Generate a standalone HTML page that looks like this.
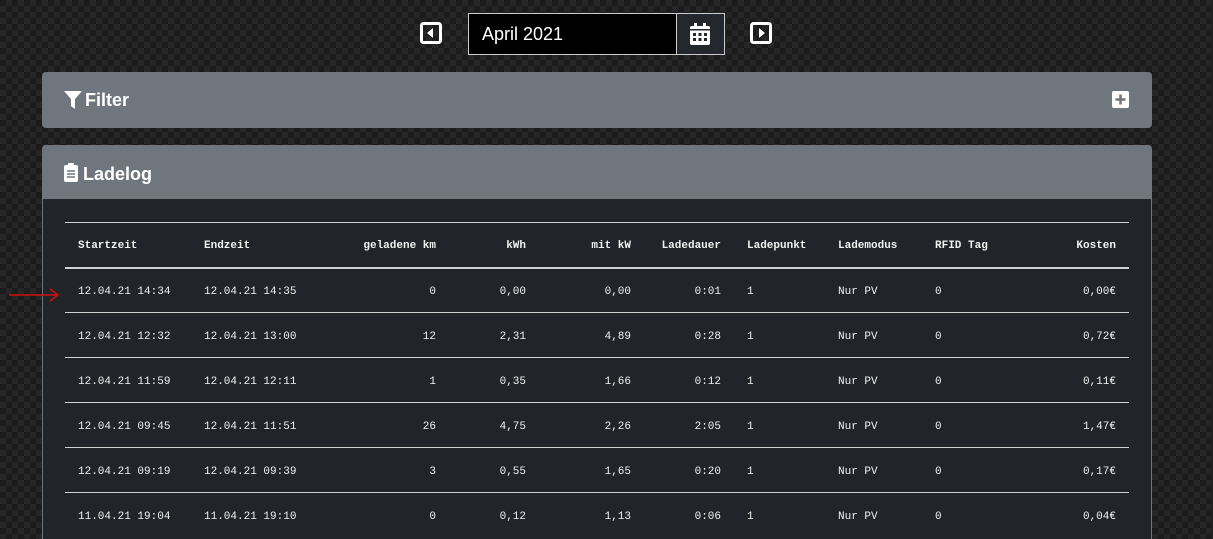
<!DOCTYPE html>
<html><head><meta charset="utf-8"><style>
*{box-sizing:border-box;margin:0;padding:0}
body{width:1213px;height:537px;overflow:hidden;font-family:"Liberation Sans",sans-serif;
background-color:#1c1c1c;
background-image:linear-gradient(45deg,#262626 25%,transparent 25%,transparent 75%,#262626 75%),linear-gradient(45deg,#262626 25%,transparent 25%,transparent 75%,#262626 75%);
background-size:12px 12px;background-position:0 0,6px 6px;position:relative}
.abs{position:absolute}
.card{position:absolute;left:42px;width:1110px;border-radius:4px;background:#6f767e}
.hdr{color:#fff;font-weight:bold;font-size:18px}
.body{position:absolute;left:42px;top:199px;width:1110px;height:340px;background:#212428;border-left:1px solid #6f767e;border-right:1px solid #6f767e}
table{position:absolute;left:22px;top:23px;width:1064px;table-layout:fixed;border-collapse:collapse;font-family:"Liberation Mono","DejaVu Sans Mono",monospace;font-size:11px;color:#f0f0f0}
td,th{height:45px;padding:3px 13px 0;text-align:left;border-top:1px solid #d0d0d0;white-space:nowrap;overflow:visible}
th{font-weight:bold;border-bottom:2px solid #d0d0d0}
.r{text-align:right}
</style></head><body>
<svg class="abs" style="left:420px;top:22px" width="22" height="22" viewBox="0 0 22 22"><rect x="1.5" y="1.5" width="19" height="19" rx="2" fill="none" stroke="#fff" stroke-width="3"/><path d="M13 6v10l-6-5z" fill="#fff"/></svg>
<div class="abs" style="left:468px;top:13px;width:257px;height:42px;border:1px solid #ccc;background:#000"></div>
<div class="abs" style="left:482px;top:24px;color:#fff;font-size:18px">April 2021</div>
<div class="abs" style="left:676px;top:14px;width:48px;height:40px;background:#24272b;border-left:1px solid #ccc"></div>
<svg class="abs" style="left:689px;top:22px" width="22" height="24" viewBox="0 0 22 24"><rect x="1" y="4" width="20" height="19" rx="2" fill="#fff"/><rect x="5" y="1" width="3" height="5" fill="#fff"/><rect x="14" y="1" width="3" height="5" fill="#fff"/><rect x="1" y="7" width="20" height="1.5" fill="#24272b"/><g fill="#24272b"><rect x="4" y="11" width="3" height="3"/><rect x="9.5" y="11" width="3" height="3"/><rect x="15" y="11" width="3" height="3"/><rect x="4" y="16" width="3" height="3"/><rect x="9.5" y="16" width="3" height="3"/><rect x="15" y="16" width="3" height="3"/></g></svg>
<svg class="abs" style="left:750px;top:22px" width="22" height="22" viewBox="0 0 22 22"><rect x="1.5" y="1.5" width="19" height="19" rx="2" fill="none" stroke="#fff" stroke-width="3"/><path d="M9 6v10l6-5z" fill="#fff"/></svg>

<div class="card" style="top:72px;height:56px"></div>
<svg class="abs" style="left:64px;top:91px" width="18" height="18" viewBox="0 0 18 18"><path d="M0 0h18l-7 8v10l-4-3V8z" fill="#fff"/></svg>
<div class="abs hdr" style="left:85px;top:90px">Filter</div>
<svg class="abs" style="left:1112px;top:91px" width="17" height="17" viewBox="0 0 17 17"><rect width="17" height="17" rx="2" fill="#fff"/><path d="M8.5 3.5v10M3.5 8.5h10" stroke="#6f767e" stroke-width="2.5"/></svg>

<div class="card" style="top:145px;height:60px;border-radius:4px 4px 0 0"></div>
<svg class="abs" style="left:64px;top:163px" width="14" height="19" viewBox="0 0 14 19"><rect x="0" y="2" width="14" height="17" rx="2" fill="#fff"/><rect x="4" y="0" width="6" height="4" rx="1" fill="#fff"/><g stroke="#6f767e" stroke-width="1.5"><path d="M3 8h8M3 11h8M3 14h8"/></g></svg>
<div class="abs hdr" style="left:83px;top:164px">Ladelog</div>
<div class="body">
<table>
<colgroup><col style="width:126px"><col style="width:125px"><col style="width:133px"><col style="width:90px"><col style="width:105px"><col style="width:90px"><col style="width:91px"><col style="width:97px"><col style="width:100px"><col style="width:107px"></colgroup>
<tr><th>Startzeit</th><th>Endzeit</th><th class="r">geladene km</th><th class="r">kWh</th><th class="r">mit kW</th><th class="r">Ladedauer</th><th>Ladepunkt</th><th>Lademodus</th><th>RFID Tag</th><th class="r">Kosten</th></tr>
<tr><td>12.04.21 14:34</td><td>12.04.21 14:35</td><td class="r">0</td><td class="r">0,00</td><td class="r">0,00</td><td class="r">0:01</td><td>1</td><td>Nur PV</td><td>0</td><td class="r">0,00€</td></tr>
<tr><td>12.04.21 12:32</td><td>12.04.21 13:00</td><td class="r">12</td><td class="r">2,31</td><td class="r">4,89</td><td class="r">0:28</td><td>1</td><td>Nur PV</td><td>0</td><td class="r">0,72€</td></tr>
<tr><td>12.04.21 11:59</td><td>12.04.21 12:11</td><td class="r">1</td><td class="r">0,35</td><td class="r">1,66</td><td class="r">0:12</td><td>1</td><td>Nur PV</td><td>0</td><td class="r">0,11€</td></tr>
<tr><td>12.04.21 09:45</td><td>12.04.21 11:51</td><td class="r">26</td><td class="r">4,75</td><td class="r">2,26</td><td class="r">2:05</td><td>1</td><td>Nur PV</td><td>0</td><td class="r">1,47€</td></tr>
<tr><td>12.04.21 09:19</td><td>12.04.21 09:39</td><td class="r">3</td><td class="r">0,55</td><td class="r">1,65</td><td class="r">0:20</td><td>1</td><td>Nur PV</td><td>0</td><td class="r">0,17€</td></tr>
<tr><td>11.04.21 19:04</td><td>11.04.21 19:10</td><td class="r">0</td><td class="r">0,12</td><td class="r">1,13</td><td class="r">0:06</td><td>1</td><td>Nur PV</td><td>0</td><td class="r">0,04€</td></tr>
</table>
</div>
<svg class="abs" style="left:8px;top:287px" width="52" height="16" viewBox="0 0 52 16"><path d="M1 8h48M42 2l8 6-8 6" stroke="#d01010" stroke-width="1.5" fill="none"/></svg>
</body></html>
